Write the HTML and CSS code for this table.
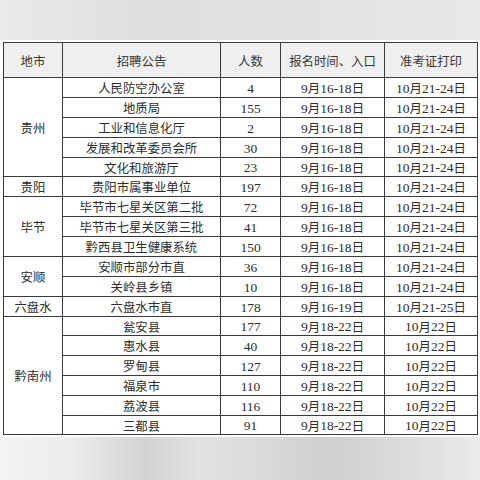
FILE: index.html
```html
<!DOCTYPE html>
<html lang="zh-CN">
<head>
<meta charset="utf-8">
<title>招聘公告</title>
<link rel="stylesheet" href="styles.css">
</head>
<body>
<div class="top-band"></div>
<div class="sheet">
  <div class="table">
    <div class="c h">地市</div>
    <div class="c h">招聘公告</div>
    <div class="c h">人数</div>
    <div class="c h">报名时间、入口</div>
    <div class="c h">准考证打印</div>

    <div class="c s5">贵州</div>
    <div class="c">人民防空办公室</div><div class="c"><span class="n">4</span></div><div class="c"><span class="n">9</span>月<span class="n">16-18</span>日</div><div class="c"><span class="n">10</span>月<span class="n">21-24</span>日</div>
    <div class="c">地质局</div><div class="c"><span class="n">155</span></div><div class="c"><span class="n">9</span>月<span class="n">16-18</span>日</div><div class="c"><span class="n">10</span>月<span class="n">21-24</span>日</div>
    <div class="c">工业和信息化厅</div><div class="c"><span class="n">2</span></div><div class="c"><span class="n">9</span>月<span class="n">16-18</span>日</div><div class="c"><span class="n">10</span>月<span class="n">21-24</span>日</div>
    <div class="c">发展和改革委员会所</div><div class="c"><span class="n">30</span></div><div class="c"><span class="n">9</span>月<span class="n">16-18</span>日</div><div class="c"><span class="n">10</span>月<span class="n">21-24</span>日</div>
    <div class="c">文化和旅游厅</div><div class="c"><span class="n">23</span></div><div class="c"><span class="n">9</span>月<span class="n">16-18</span>日</div><div class="c"><span class="n">10</span>月<span class="n">21-24</span>日</div>

    <div class="c">贵阳</div>
    <div class="c">贵阳市属事业单位</div><div class="c"><span class="n">197</span></div><div class="c"><span class="n">9</span>月<span class="n">16-18</span>日</div><div class="c"><span class="n">10</span>月<span class="n">21-24</span>日</div>

    <div class="c s3">毕节</div>
    <div class="c">毕节市七星关区第二批</div><div class="c"><span class="n">72</span></div><div class="c"><span class="n">9</span>月<span class="n">16-18</span>日</div><div class="c"><span class="n">10</span>月<span class="n">21-24</span>日</div>
    <div class="c">毕节市七星关区第三批</div><div class="c"><span class="n">41</span></div><div class="c"><span class="n">9</span>月<span class="n">16-18</span>日</div><div class="c"><span class="n">10</span>月<span class="n">21-24</span>日</div>
    <div class="c">黔西县卫生健康系统</div><div class="c"><span class="n">150</span></div><div class="c"><span class="n">9</span>月<span class="n">16-18</span>日</div><div class="c"><span class="n">10</span>月<span class="n">21-24</span>日</div>

    <div class="c s2">安顺</div>
    <div class="c">安顺市部分市直</div><div class="c"><span class="n">36</span></div><div class="c"><span class="n">9</span>月<span class="n">16-18</span>日</div><div class="c"><span class="n">10</span>月<span class="n">21-24</span>日</div>
    <div class="c">关岭县乡镇</div><div class="c"><span class="n">10</span></div><div class="c"><span class="n">9</span>月<span class="n">16-18</span>日</div><div class="c"><span class="n">10</span>月<span class="n">21-24</span>日</div>

    <div class="c">六盘水</div>
    <div class="c">六盘水市直</div><div class="c"><span class="n">178</span></div><div class="c"><span class="n">9</span>月<span class="n">16-19</span>日</div><div class="c"><span class="n">10</span>月<span class="n">21-25</span>日</div>

    <div class="c s6">黔南州</div>
    <div class="c">瓮安县</div><div class="c"><span class="n">177</span></div><div class="c"><span class="n">9</span>月<span class="n">18-22</span>日</div><div class="c"><span class="n">10</span>月<span class="n">22</span>日</div>
    <div class="c">惠水县</div><div class="c"><span class="n">40</span></div><div class="c"><span class="n">9</span>月<span class="n">18-22</span>日</div><div class="c"><span class="n">10</span>月<span class="n">22</span>日</div>
    <div class="c">罗甸县</div><div class="c"><span class="n">127</span></div><div class="c"><span class="n">9</span>月<span class="n">18-22</span>日</div><div class="c"><span class="n">10</span>月<span class="n">22</span>日</div>
    <div class="c">福泉市</div><div class="c"><span class="n">110</span></div><div class="c"><span class="n">9</span>月<span class="n">18-22</span>日</div><div class="c"><span class="n">10</span>月<span class="n">22</span>日</div>
    <div class="c">荔波县</div><div class="c"><span class="n">116</span></div><div class="c"><span class="n">9</span>月<span class="n">18-22</span>日</div><div class="c"><span class="n">10</span>月<span class="n">22</span>日</div>
    <div class="c">三都县</div><div class="c"><span class="n">91</span></div><div class="c"><span class="n">9</span>月<span class="n">18-22</span>日</div><div class="c"><span class="n">10</span>月<span class="n">22</span>日</div>
  </div>
</div>
<div class="bottom-band"></div>
</body>
</html>
```

FILE: styles.css
```css
html, body {
  margin: 0;
  padding: 0;
  width: 480px;
  height: 480px;
  overflow: hidden;
  background: #ffffff;
}

.top-band {
  height: 40px;
  background: linear-gradient(to right, #eaeaea 0%, #dedede 30%, #e1e1e1 60%, #e8e8e8 100%);
}

.sheet {
  background: #ffffff;
  padding: 2px 0 2px 3px;
}

.table {
  display: grid;
  width: max-content;
  grid-template-columns: 58px 157px 59px 103px 92px;
  grid-template-rows: 34px 19px 19px 19px 19px 18px 19px 19px 19px 19px 19px 19px 19px 18px 19px 19px 19px 19px 18px;
  gap: 1px;
  padding: 1px;
  background: #3a3a3a;
}

.c {
  display: flex;
  align-items: center;
  justify-content: center;
  padding-top: 2px;
  box-sizing: border-box;
  background: #ffffff;
  color: #2e2e2e;
  font-family: "Noto Sans CJK SC", sans-serif;
  font-size: 12.4px;
  line-height: 1;
  white-space: nowrap;
}

.n {
  font-family: "Liberation Serif", serif;
  font-size: 13.5px;
  line-height: 1;
}

.h {
  background: #efefef;
  color: #383838;
}

.s2 { grid-row: span 2; }
.s3 { grid-row: span 3; }
.s5 { grid-row: span 5; }
.s6 { grid-row: span 6; }

.bottom-band {
  height: 43px;
  background: linear-gradient(to right, #f3f3f3 0%, #ececec 15%, #d3d3d3 30%, #e2e2e2 42%, #dadada 55%, #cfcfcf 68%, #dcdcdc 85%, #ebebeb 100%);
}
```
